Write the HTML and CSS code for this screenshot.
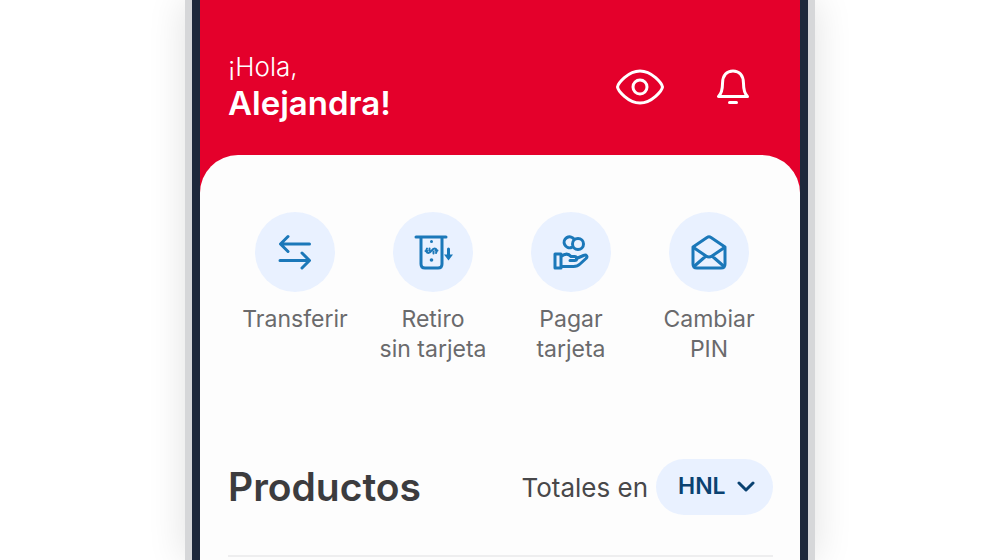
FILE: index.html
```html
<!DOCTYPE html>
<html lang="es">
<head>
    <meta charset="UTF-8">
    <meta name="viewport" content="width=device-width, initial-scale=1.0">
    <title>Inicio</title>
    <link rel="stylesheet" href="styles.css">
</head>
<body>
    <div class="phone">
        <header class="header">
            <h1 class="greeting">¡Hola,<strong>Alejandra!</strong></h1>
            <div class="header-actions">
                <button class="icon-btn" type="button" aria-label="Ocultar saldos">
                    <svg width="48" height="36" viewBox="0 0 48 36">
                        <path d="M1.500 18C2 14.500 12 2 24 2s22 12.500 22.500 16C46 21.500 36 34 24 34S2 21.500 1.500 18z"/>
                        <circle cx="24" cy="18" r="7"/>
                    </svg>
                </button>
                <button class="icon-btn" type="button" aria-label="Notificaciones">
                    <svg width="32" height="36" viewBox="0 0 32 36">
                        <path d="M1.500 27.500h29C27.500 24.500 26.500 21 26.500 14.500 26.500 6 22 2 16 2S5.500 6 5.500 14.500C5.500 21 4.500 24.500 1.500 27.500z"/>
                        <path d="M12.500 33.500h7"/>
                    </svg>
                </button>
            </div>
        </header>

        <main class="panel">
            <nav class="shortcuts">
                <a class="shortcut" href="#transferir">
                    <span class="shortcut-icon">
                        <svg width="40" height="40" viewBox="0 0 40 40">
                            <path d="M34.500 12H6M13 4.500L5.500 12l7.500 7.500M5 28.500h29M27 21l7.500 7.500L27 36"/>
                        </svg>
                    </span>
                    Transferir
                </a>
                <a class="shortcut" href="#retiro">
                    <span class="shortcut-icon">
                        <svg width="40" height="40" viewBox="0 0 40 40">
                            <path d="M3 5h30M8 5v27c0 2.500 1.500 4 4 4h13c2.500 0 4-1.500 4-4V5"/>
                            <path d="M35.500 17v8"/>
                            <path class="dot" d="M31 22.500h9l-4.500 6z"/>
                            <path class="bill" d="M14 16.500c-1.500 2.500-.5 4.500 1.500 4.500 3 0 3-4.500 6-4.500 2 0 3 2 1.500 4.500M12.500 19h2M22.500 18.500h2M16.500 16.500v2M20.500 19.500v2"/>
                            <circle class="dot" cx="18.500" cy="9.500" r="1.500"/>
                            <circle class="dot" cx="18.500" cy="28" r="1.800"/>
                        </svg>
                    </span>
                    Retiro<br>sin tarjeta
                </a>
                <a class="shortcut" href="#pagar">
                    <span class="shortcut-icon">
                        <svg width="40" height="40" viewBox="0 0 40 40">
                            <circle cx="27" cy="12" r="5.500"/>
                            <path d="M20.500 15.500a5.500 5.500 0 1 1 2.500-8.500"/>
                            <path d="M4 22h6v14H4zM10 24.500c4-3 7.500-3 10 0h3.500c3 0 3 4 0 4H19M25.500 26.500l7-3c3-1.200 4.500 1 2.500 3l-6 5.500c-2 2-4 2.500-6.500 2.500H10"/>
                        </svg>
                    </span>
                    Pagar<br>tarjeta
                </a>
                <a class="shortcut" href="#pin">
                    <span class="shortcut-icon">
                        <svg width="40" height="40" viewBox="0 0 40 40">
                            <path d="M4 15L18 5.500c1.500-1 2.500-1 4 0L36 15v17c0 2.500-1.500 4-4 4H8c-2.500 0-4-1.500-4-4z"/>
                            <path d="M4.500 15.500L17 24c2 1.300 4 1.300 6 0l12.500-8.500M5.500 34L17 24M34.500 34L23 24"/>
                        </svg>
                    </span>
                    Cambiar<br>PIN
                </a>
            </nav>

            <section class="products">
                <div class="products-header">
                    <h2>Productos</h2>
                    <div class="currency">
                        <label for="currency">Totales en</label>
                        <div class="select-wrap">
                            <select id="currency">
                                <option>HNL</option>
                                <option>USD</option>
                            </select>
                            <svg class="chevron" width="18" height="12" viewBox="0 0 18 12">
                                <path d="M2 2l7 7 7-7"/>
                            </svg>
                        </div>
                    </div>
                </div>
            </section>
        </main>
    </div>
</body>
</html>
```

FILE: styles.css
```css
* {
    box-sizing: border-box;
}

body {
    margin: 0;
    background-color: #ffffff;
    font-family: Inter, "Liberation Sans", sans-serif;
    color: #3c3c3e;
    overflow: hidden;
}

/* Phone frame */
.phone {
    width: 63%;
    min-height: 100vh;
    margin: 0 auto;
    display: flex;
    flex-direction: column;
    border: solid #d6d7d9;
    border-width: 0 7px;
    background-color: #e4002b;
    box-shadow: 0 0 36px rgba(0, 0, 0, 0.12);
}

.header,
.panel {
    border: solid #1e293b;
    border-width: 0 8px;
}

.header {
    display: flex;
    justify-content: space-between;
    align-items: flex-end;
    padding: 49px 39px 34px 28px;
    color: #ffffff;
}

.greeting {
    margin: 0;
    font-size: 26px;
    font-weight: 300;
    line-height: 36px;
}

.greeting strong {
    display: block;
    font-size: 33px;
    font-weight: 600;
}

.header-actions {
    display: flex;
    gap: 37px;
}

.icon-btn {
    display: flex;
    justify-content: center;
    align-items: center;
    width: 56px;
    height: 68px;
    padding: 0;
    border: none;
    background: none;
    cursor: pointer;
}

svg {
    fill: none;
    stroke-linecap: round;
    stroke-linejoin: round;
}

.icon-btn svg {
    stroke: #ffffff;
    stroke-width: 3;
}

/* White sheet */
.panel {
    position: relative;
    flex: 1;
    z-index: 0;
    padding: 57px 0 0;
}

.panel::before {
    content: "";
    position: absolute;
    inset: 0;
    z-index: -1;
    border-radius: 38px 38px 0 0;
    background-color: #fdfdfd;
}

.shortcuts {
    display: grid;
    grid-template-columns: repeat(4, 1fr);
    padding: 0 22px 0 26px;
}

.shortcut {
    display: flex;
    flex-direction: column;
    align-items: center;
    color: #6a6a6c;
    font-size: 23px;
    line-height: 30px;
    text-align: center;
    text-decoration: none;
}

.shortcut-icon {
    display: flex;
    justify-content: center;
    align-items: center;
    width: 80px;
    height: 80px;
    margin-bottom: 12px;
    border-radius: 50%;
    background-color: #e9f1ff;
}

.shortcut-icon svg {
    stroke: #1b78b9;
    stroke-width: 3;
}

.shortcut-icon .bill {
    stroke-width: 2;
}

.shortcut-icon .dot {
    fill: #1b78b9;
    stroke: none;
}

/* Products */
.products {
    padding: 95px 27px 0 28px;
}

.products-header {
    display: flex;
    justify-content: space-between;
    align-items: center;
    padding-bottom: 40px;
    border-bottom: 2px solid #eeeeef;
}

.products h2 {
    margin: 0;
    font-size: 39px;
    font-weight: 600;
    line-height: 54px;
}

.currency {
    display: flex;
    align-items: center;
    gap: 8px;
    color: #48484a;
    font-size: 26px;
}

.select-wrap {
    position: relative;
}

.select-wrap select {
    appearance: none;
    width: 117px;
    height: 56px;
    padding: 0 44px 2px 22px;
    border: none;
    border-radius: 28px;
    background-color: #e9f1ff;
    color: #0a4271;
    font-family: inherit;
    font-size: 23px;
    font-weight: 600;
    cursor: pointer;
}

.chevron {
    position: absolute;
    top: 22px;
    right: 18px;
    stroke: #0a4271;
    stroke-width: 3;
    pointer-events: none;
}
```
